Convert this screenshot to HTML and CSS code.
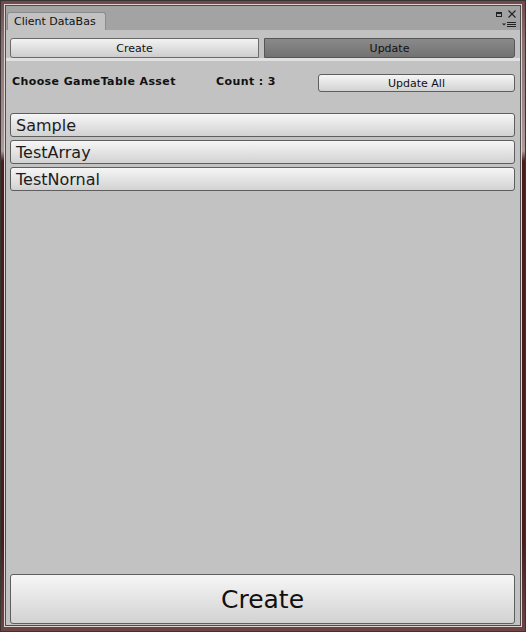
FILE: index.html
```html
<!DOCTYPE html>
<html lang="en">
  <head>
    <meta charset="UTF-8" />
    <meta name="viewport" content="width=device-width, initial-scale=1.0" />
    <title>Client DataBase</title>
    <link rel="stylesheet" href="styles.css">
  </head>
  <body>
    <div class="frame">
      <div class="window">
        <div class="pane">
          <div class="tabbar">
            <div class="tab">Client DataBas</div>
            <div class="win-icons">
              <div class="icon-row">
                <span class="icon-max"></span>
                <svg class="icon-close" width="8" height="8" viewBox="0 0 8 8">
                  <path d="M0.5 0.5 L7.5 7.5 M7.5 0.5 L0.5 7.5" stroke="#222" stroke-width="1.1" fill="none" />
                </svg>
              </div>
              <svg class="icon-menu" width="14" height="6" viewBox="0 0 14 6">
                <path d="M0 1.5 H4 L2 3.5 Z" fill="#222" />
                <path d="M5 0.5 H14 M5 2.5 H14 M5 4.5 H14" stroke="#222" stroke-width="1" />
              </svg>
            </div>
          </div>

          <div class="content">
            <div class="toolbar">
              <button class="tool-btn left">Create</button>
              <button class="tool-btn right active">Update</button>
            </div>
            <div class="separator"></div>

            <div class="info-row">
              <span class="label name">Choose GameTable Asset</span>
              <span class="label">Count : 3</span>
              <button class="btn small">Update All</button>
            </div>

            <div class="asset-list">
              <button class="btn asset">Sample</button>
              <button class="btn asset">TestArray</button>
              <button class="btn asset">TestNornal</button>
            </div>

            <button class="btn big">Create</button>
          </div>
        </div>
      </div>
    </div>
  </body>
</html>
```

FILE: styles.css
```css
html,
body {
  margin: 0;
  padding: 0;
}
body {
  width: 526px;
  height: 632px;
  font-family: "DejaVu Sans", sans-serif;
  color: #111;
}
.frame {
  box-sizing: border-box;
  height: 632px;
  border: 1px solid #3a3434;
  padding: 3px 3px 4px 3px;
  background: linear-gradient(
    to bottom,
    #6e4a4a 0,
    #8c7070 40px,
    #b09a9a 150px,
    #4a1c1c 160px,
    #4a1c1c 540px,
    #6e4646 632px
  );
}
.window {
  height: 100%;
  box-sizing: border-box;
  border: 1px solid #ddd3d3;
}
.pane {
  height: 100%;
  box-sizing: border-box;
  border: 1px solid #4e4e4e;
  display: flex;
  flex-direction: column;
  background-color: #c2c2c2;
}
.tabbar {
  height: 24px;
  flex-shrink: 0;
  background-color: #a3a3a3;
  display: flex;
  align-items: flex-end;
  justify-content: space-between;
  padding-left: 1px;
}
.tab {
  height: 18px;
  box-sizing: border-box;
  width: 99px;
  background-color: #c2c2c2;
  border: 1px solid #8c8c8c;
  border-bottom: none;
  border-radius: 3px 3px 0 0;
  font-size: 11px;
  line-height: 17px;
  padding-left: 6px;
  color: #111;
}
.win-icons {
  align-self: stretch;
  display: flex;
  flex-direction: column;
  align-items: flex-end;
  padding: 4px 4px 0 0;
  gap: 4px;
}
.icon-row {
  display: flex;
  align-items: center;
  gap: 6px;
}
.icon-max {
  display: block;
  width: 4px;
  height: 2px;
  border: 1px solid #222;
  border-top-width: 2px;
}
.icon-close {
  display: block;
}
.icon-menu {
  display: block;
}
.content {
  flex: 1;
  display: flex;
  flex-direction: column;
  padding: 0 4px 1px 4px;
}
.toolbar {
  display: flex;
  gap: 5px;
  margin-top: 8px;
  margin-right: 1px;
}
.tool-btn {
  flex: 1;
  height: 20px;
  font-family: "DejaVu Sans", sans-serif;
  font-size: 11px;
  color: #111;
  border: 1px solid #6a6a6a;
  background: linear-gradient(to bottom, #f2f2f2, #cdcdcd);
  padding: 0;
  margin: 0;
}
.tool-btn.left {
  flex: 0 0 249px;
  border-radius: 3px 0 0 3px;
}
.tool-btn.right {
  border-radius: 0 3px 3px 0;
}
.tool-btn.active {
  background: linear-gradient(to bottom, #8a8a8a, #727272);
  border-color: #555;
}
.separator {
  height: 3px;
  margin: 0 -4px;
  background-color: #e0e0e0;
}
.info-row {
  display: flex;
  align-items: center;
  margin-top: 13px;
  height: 18px;
}
.label {
  font-size: 11px;
  font-weight: bold;
  letter-spacing: 0.4px;
  padding-left: 2px;
  margin-top: -4px;
}
.label.name {
  width: 202px;
}
.btn {
  font-family: "DejaVu Sans", sans-serif;
  color: #111;
  border: 1px solid #5e5e5e;
  border-radius: 3px;
  background: linear-gradient(to bottom, #f6f6f6, #d2d2d2);
  margin: 0;
  padding: 0;
}
.btn.small {
  margin-left: auto;
  width: 197px;
  height: 18px;
  font-size: 11px;
  margin-right: 1px;
}
.asset-list {
  display: flex;
  flex-direction: column;
  gap: 3px;
  margin-top: 21px;
  margin-right: 1px;
}
.btn.asset {
  height: 24px;
  font-size: 16px;
  color: #1c1c1c;
  text-align: left;
  padding-left: 5px;
}
.btn.big {
  margin-top: auto;
  margin-right: 1px;
  height: 50px;
  font-size: 25px;
}
```
